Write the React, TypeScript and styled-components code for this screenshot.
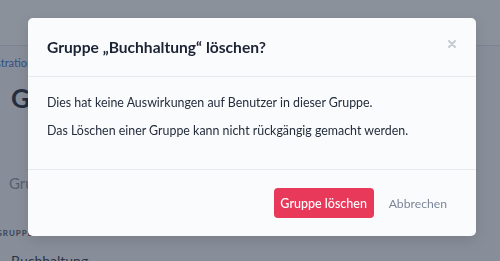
import React from "react";
import styled, { createGlobalStyle } from "styled-components";

const Global = createGlobalStyle`
  html, body { margin: 0; padding: 0; }
  body { font-family: "Lato", "Noto Sans", sans-serif; background: #ffffff; width: 500px; height: 261px; overflow: hidden; }
`;

const Page = styled.div`
  width: 500px;
  height: 261px;
  background: #f7f8fa;
  display: flex;
  flex-direction: column;
  overflow: hidden;
`;

const TopBar = styled.div`
  height: 45px;
  flex: none;
  background: #ffffff;
  border-bottom: 1px solid #dde2e8;
`;

const Content = styled.div`
  padding: 10px 0 0 0;
  display: flex;
  flex-direction: column;
`;

const Crumb = styled.div`
  font-size: 11px;
  color: #2f6fd6;
  margin-left: -38px;
  line-height: 14px;
`;

const PageTitle = styled.div`
  font-size: 26px;
  font-weight: 700;
  color: #1c2536;
  margin: 12px 0 0 11px;
`;

const Tab = styled.div`
  font-size: 15px;
  color: #8a93a3;
  margin: 60px 0 0 9px;
`;

const Section = styled.div`
  font-size: 8px;
  letter-spacing: 1px;
  font-weight: 700;
  color: #4b5567;
  margin: 36px 0 0 -4px;
`;

const Item = styled.div`
  font-size: 14px;
  color: #2a3344;
  margin: 14px 0 0 11px;
`;

const Overlay = styled.div`
  position: fixed;
  inset: 0;
  background: rgba(44, 55, 72, 0.55);
  padding: 18px 0 0 28px;
  box-sizing: border-box;
`;

const Modal = styled.div`
  width: 448px;
  background: #fafbfc;
  border-radius: 5px;
  box-shadow: 0 4px 14px rgba(0, 0, 0, 0.12);
  display: flex;
  flex-direction: column;
`;

const Header = styled.div`
  height: 59px;
  box-sizing: border-box;
  padding: 0 19px;
  border-bottom: 1px solid #e6e9ee;
  display: flex;
  align-items: center;
  justify-content: space-between;
`;

const Title = styled.h2`
  margin: 0;
  font-size: 15.6px;
  font-weight: 700;
  color: #1b2434;
`;

const Close = styled.button`
  border: 0;
  background: none;
  padding: 0;
  width: 14px;
  height: 14px;
  margin-right: -2px;
  margin-top: -6px;
  display: flex;
  align-items: center;
  justify-content: center;
`;

const Body = styled.div`
  height: 93px;
  box-sizing: border-box;
  padding: 16px 19px 0;
  border-bottom: 1px solid #e6e9ee;
`;

const Para = styled.p`
  margin: 0 0 8px;
  font-size: 12.4px;
  line-height: 20px;
  color: #242d3c;
`;

const Footer = styled.div`
  height: 66px;
  box-sizing: border-box;
  padding: 0 29px 0 0;
  display: flex;
  align-items: center;
  justify-content: flex-end;
  gap: 15px;
`;

const Danger = styled.button`
  width: 100px;
  height: 30px;
  border: 0;
  border-radius: 4px;
  background: #e8395a;
  color: #ffffff;
  font-family: inherit;
  font-size: 12.5px;
  font-weight: 500;
  white-space: nowrap;
  padding: 0;
`;

const Cancel = styled.button`
  border: 0;
  background: none;
  padding: 0;
  color: #7d8799;
  font-family: inherit;
  font-size: 12.2px;
  white-space: nowrap;
`;

export default function App() {
  return (
    <>
      <Global />
      <Page>
        <TopBar />
        <Content>
          <Crumb>Administration</Crumb>
          <PageTitle>Gruppen</PageTitle>
          <Tab>Gruppen</Tab>
          <Section>GRUPPEN</Section>
          <Item>Buchhaltung</Item>
        </Content>
      </Page>
      <Overlay>
        <Modal>
          <Header>
            <Title>Gruppe „Buchhaltung“ löschen?</Title>
            <Close aria-label="Schließen">
              <svg width="8" height="8" viewBox="0 0 8 8">
                <path d="M1 1L7 7M7 1L1 7" stroke="#c3c8d0" strokeWidth="1.8" strokeLinecap="round" />
              </svg>
            </Close>
          </Header>
          <Body>
            <Para>Dies hat keine Auswirkungen auf Benutzer in dieser Gruppe.</Para>
            <Para>Das Löschen einer Gruppe kann nicht rückgängig gemacht werden.</Para>
          </Body>
          <Footer>
            <Danger>Gruppe löschen</Danger>
            <Cancel>Abbrechen</Cancel>
          </Footer>
        </Modal>
      </Overlay>
    </>
  );
}
